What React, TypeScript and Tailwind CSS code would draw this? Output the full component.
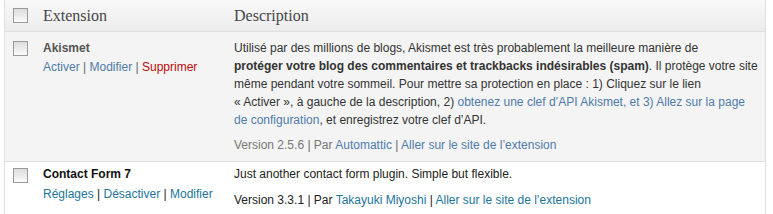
import React from 'react';

const Box = () => (
    <span className="block h-[15px] w-[15px] border border-[#9a9a9a] bg-gradient-to-b from-[#dcdcdc] to-[#fbfbfb]" />
);

const Sep = ({ dark }: { dark?: boolean }) => (
    <span className={dark ? 'text-[#222]' : 'text-[#666]'}> | </span>
);

const App: React.FC = () => {
    return (
        <div className="h-[214px] w-[773px] bg-white pl-[4px] pr-[7px] font-['Liberation_Sans',Arial,sans-serif] text-[12px]">
            <div className="border-x border-[#dfdfdf]">
                {/* header */}
                <div className="flex h-[32px] items-center border-b border-[#dfdfdf] bg-gradient-to-b from-[#f9f9f9] to-[#ececec] font-['Liberation_Serif',Georgia,serif] text-[16px] text-[#464646]">
                    <div className="w-[38px] shrink-0 pl-[8px]">
                        <Box />
                    </div>
                    <div className="w-[191px] shrink-0">Extension</div>
                    <div>Description</div>
                </div>

                {/* Akismet, inactive */}
                <div className="flex border-b border-[#dfdfdf] bg-[#f4f4f4] pb-[7px] pt-[7px] leading-[18px] text-[#333]">
                    <div className="w-[38px] shrink-0 pl-[8px] pt-[2px]">
                        <Box />
                    </div>
                    <div className="w-[191px] shrink-0">
                        <div className="font-bold text-[#555]">Akismet</div>
                        <div className="mt-[1px] text-[#4f7bab]">
                            Activer<Sep />Modifier<Sep />
                            <span className="text-[#bc0b0b]">Supprimer</span>
                        </div>
                    </div>
                    <div className="flex-1 pr-[4px]">
                        <p>
                            Utilisé par des millions de blogs, Akismet est très probablement la meilleure manière de
                            <br />
                            <strong>protéger votre blog des commentaires et trackbacks indésirables (spam)</strong>. Il protège votre site
                            <br />
                            même pendant votre sommeil. Pour mettre sa protection en place : 1) Cliquez sur le lien
                            <br />
                            « Activer », à gauche de la description, 2){' '}
                            <span className="text-[#4f7bab]">obtenez une clef d’API Akismet, et 3) Allez sur la page</span>
                            <br />
                            <span className="text-[#4f7bab]">de configuration</span>, et enregistrez votre clef d’API.
                        </p>
                        <p className="mt-[7px] text-[#777]">
                            Version 2.5.6<Sep />Par <span className="text-[#4f7bab]">Automattic</span><Sep />
                            <span className="text-[#4f7bab]">Aller sur le site de l’extension</span>
                        </p>
                    </div>
                </div>

                {/* Contact Form 7, active */}
                <div className="flex bg-white pb-[10px] pt-[3px] leading-[18px] text-[#222]">
                    <div className="w-[38px] shrink-0 pl-[8px] pt-[3px]">
                        <Box />
                    </div>
                    <div className="w-[191px] shrink-0">
                        <div className="font-bold text-[#111]">Contact Form 7</div>
                        <div className="mt-[2px] text-[#21759b]">
                            Réglages<Sep dark />Désactiver<Sep dark />Modifier
                        </div>
                    </div>
                    <div className="flex-1">
                        <p>Just another contact form plugin. Simple but flexible.</p>
                        <p className="mt-[8px]">
                            Version 3.3.1<Sep dark />Par <span className="text-[#21759b]">Takayuki Miyoshi</span><Sep dark />
                            <span className="text-[#21759b]">Aller sur le site de l’extension</span>
                        </p>
                    </div>
                </div>
            </div>
        </div>
    );
};

export default App;
